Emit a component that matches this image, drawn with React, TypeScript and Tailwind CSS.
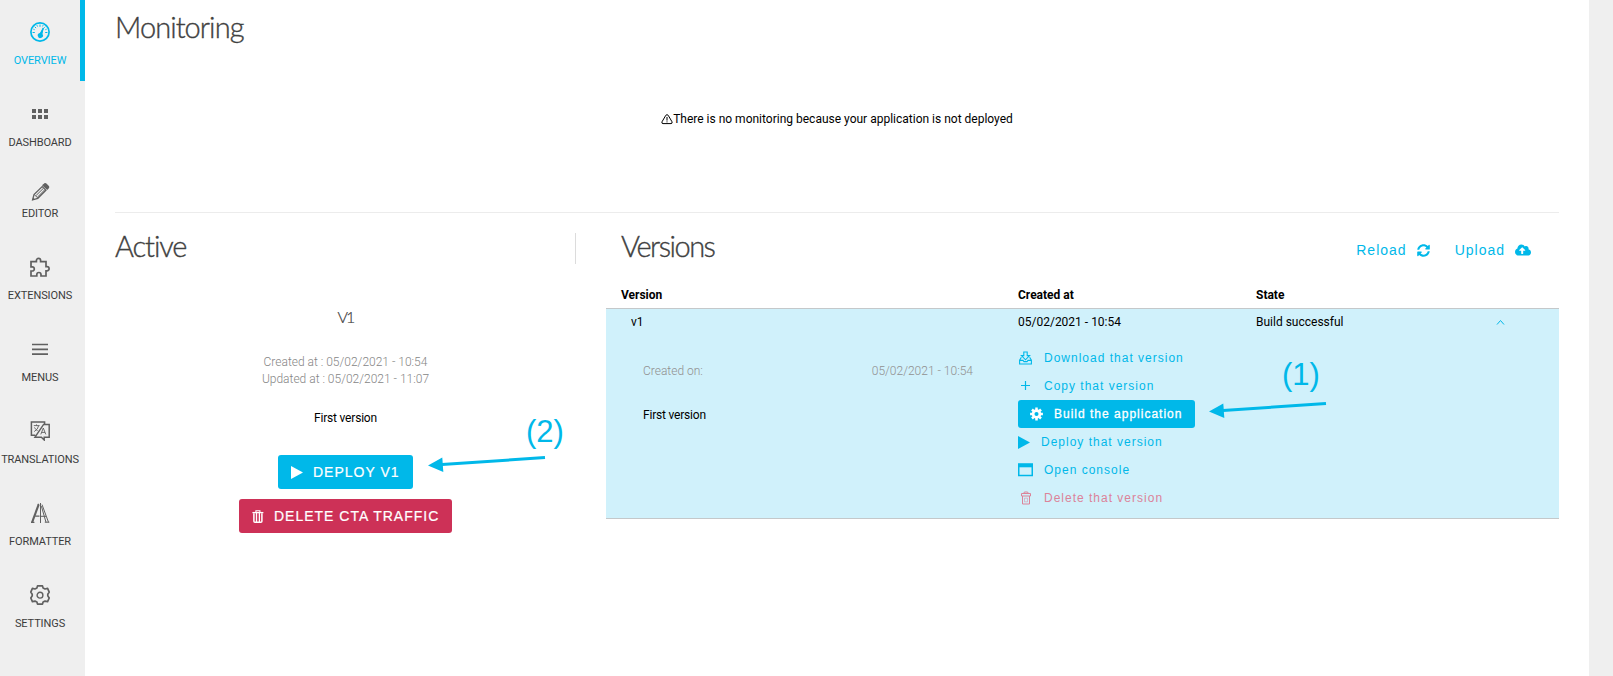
import type { ReactNode } from 'react';
import { FaCloudUploadAlt, FaSyncAlt } from 'react-icons/fa';

function GaugeIcon() {
  return (
    <svg width="20" height="20" viewBox="0 0 20 20" fill="none" stroke="currentColor">
      <circle cx="10" cy="10" r="9.1" strokeWidth="1.7" />
      <path d="M10 2.5v2.3M4.7 4.7l1.4 1.4M2.6 10.5h2.2M15.2 10.5h2.2M15.3 4.7l-1 1M3.4 7.2l1.2.5M6.9 3.2l.6 1.3M13.1 3.2l-.5 1.2M16.6 7.2l-1.2.5" strokeWidth="1" />
      <path d="M10.5 13.2 13.3 6" strokeWidth="1.6" />
      <path d="M13.6 5.2 12.5 12A2.6 2.6 0 1 1 9.8 10.9z" fill="currentColor" stroke="none" />
    </svg>
  );
}

function GridIcon() {
  return (
    <svg width="20" height="20" viewBox="0 0 20 20" fill="currentColor">
      <path d="M2 5h4v4H2zM8 5h4v4H8zM14 5h4v4h-4zM2 11h4v4H2zM8 11h4v4H8zM14 11h4v4h-4z" />
    </svg>
  );
}

function PencilIcon() {
  return (
    <svg width="20" height="20" viewBox="0 0 20 20" fill="none" stroke="currentColor" strokeWidth="1.3">
      <path d="M2.6 17.8 4 12.6 12.2 4.6 15.9 8.2 7.8 16.3z" />
      <path d="M4.2 12.5 8 16.2M6.2 13.4 13 6.7M7.8 14.8 14.5 8" strokeWidth="1" />
      <path d="M13 3.3 14.6 1.9Q15.3 1.4 16 2L18.4 4.5Q19 5.1 18.4 5.8L17.2 7z" fill="currentColor" />
      <path d="M2.3 18.2 3 15.5 5 17.4z" fill="currentColor" stroke="none" />
    </svg>
  );
}

function PuzzleIcon() {
  return (
    <svg width="22" height="20" viewBox="0 0 22 20" fill="none" stroke="currentColor" strokeWidth="1.7">
      <path d="M2 4.7H7.4V3.5A2 2 0 0 1 11.6 3.5V4.7H17V9.6H18A2.1 2.1 0 0 1 18 13.8H17V19H12V17.6A2.1 2.1 0 0 0 7.8 17.6V19H2V14H3.2A2.1 2.1 0 0 0 3.2 9.8H2z" />
    </svg>
  );
}

function MenuIcon() {
  return (
    <svg width="20" height="20" viewBox="0 0 20 20" fill="none" stroke="currentColor" strokeWidth="1.7">
      <path d="M2 5.5h16M2 10.3h16M2 15.2h16" />
    </svg>
  );
}

function TranslateIcon() {
  return (
    <svg width="20" height="20" viewBox="0 0 20 20" fill="none" stroke="currentColor" strokeWidth="1.5">
      <path d="M14.6 3.4V1H1.4V14.2H5.2M5 16.2H11.4L14.2 19V16.2H19.2V3.4H13.6L5 16.2z" />
      <path d="M3.8 4.6H9.6M6.5 3.4V4.6M4.2 10.6Q8 8.4 8.6 4.8M4.4 6.4Q5.6 8.8 7.6 9.6M10.8 13.4 13.3 7 15.8 13.4M11.6 11.4H15" strokeWidth=".9" />
    </svg>
  );
}

function FormatterIcon() {
  return (
    <svg width="20" height="20" viewBox="0 0 20 20" fill="none" stroke="currentColor">
      <path d="M2.1 19.3 8.7 1.4" strokeWidth="2.1" />
      <path d="M1 19.3H4.4M5.2 13.2H9.5M7.8 1.4H9" strokeWidth="1.2" />
      <path d="M10.5 0V20M12 1.6 18.5 19.3M11.4 3.2 16 19.3M10.5 13.3H16" strokeWidth="1" />
      <path d="M14.8 19.2H19.3" strokeWidth="1" />
    </svg>
  );
}

function SettingsIcon() {
  return (
    <svg width="20" height="20" viewBox="0 0 20 20" fill="none" stroke="currentColor" strokeWidth="1.7" strokeLinejoin="round">
      <path d="M7.5.9H12.5L13.1 3.1 15 4 17.6 3.4 19.2 7.1 17.8 9.2V10.9L19.2 13 17.6 16.7 15 16.1 13.1 17 12.5 19.1H7.5L6.9 17 5 16.1 2.4 16.7.8 13 2.2 10.9V9.2L.8 7.1 2.4 3.4 5 4 6.9 3.1z" />
      <circle cx="10" cy="10.2" r="2.9" strokeWidth="1.4" />
    </svg>
  );
}

function WarningIcon() {
  return (
    <svg width="12" height="11" viewBox="0 0 12 11" fill="none" stroke="currentColor" strokeWidth="1">
      <path d="M4.8 1.3Q6 0 7.2 1.3L11 7.8Q11.6 9.5 10 9.6H2Q.4 9.5 1 7.8z" />
      <path d="M6 3v3.6M6 7.4v1" />
    </svg>
  );
}

function TrashIcon() {
  return (
    <svg width="12" height="13" viewBox="0 0 12 13" fill="none" stroke="currentColor">
      <path d="M.4 2.6H11.4" strokeWidth="1.3" />
      <path d="M3.9 2.4V.7H7.9V2.4" strokeWidth="1.1" />
      <path d="M1.9 3.2V11.2Q1.9 12.2 2.9 12.2H8.9Q9.9 12.2 9.9 11.2V3.2" strokeWidth="1.5" />
      <path d="M4.5 3V12M7.4 3V12" strokeWidth="1.3" />
    </svg>
  );
}

function PlayIcon() {
  return (
    <svg width="12" height="13" viewBox="0 0 12 13" fill="currentColor">
      <path d="M0 0 12 6.5 0 13z" />
    </svg>
  );
}

function CogIcon() {
  return (
    <svg width="13" height="14" viewBox="0 0 13 14" fill="none" stroke="currentColor">
      <circle cx="6.5" cy="7" r="3.4" strokeWidth="2.7" />
      <path d="M6.5.6V3M6.5 11v2.4M.1 7h2.4M10.5 7h2.4M2 2.5l1.7 1.7M9.3 9.8 11 11.5M11 2.5 9.3 4.2M3.7 9.8 2 11.5" strokeWidth="2.5" />
    </svg>
  );
}

function DownloadIcon() {
  return (
    <svg width="15" height="14" viewBox="0 0 15 14" fill="none" stroke="currentColor" strokeWidth="1.1">
      <path d="M5.8 1H9.2V4.6H11.6L7.5 8.8 3.4 4.6H5.8z" />
      <path d="M3.4 6.2 1.6 9.2V13H13.4V9.2L11.6 6.2M1.6 9.4H5L6 10.6H9L10 9.4H13.4" />
    </svg>
  );
}

function PlusIcon() {
  return (
    <svg width="15" height="14" viewBox="0 0 15 14" fill="none" stroke="currentColor" strokeWidth="1.2">
      <path d="M3 6.5h9M7.5 2v9" />
    </svg>
  );
}

function ConsoleIcon() {
  return (
    <svg width="15" height="14" viewBox="0 0 15 14" fill="none" stroke="currentColor" strokeWidth="1.5">
      <rect x=".75" y="1.2" width="13.5" height="11.3" />
      <path d="M0 2.4H15" strokeWidth="3.8" />
    </svg>
  );
}

function BinIcon() {
  return (
    <svg width="15" height="14" viewBox="0 0 15 14" fill="none" stroke="currentColor" strokeWidth="1">
      <path d="M3.5 2.5H12.5V5H3.5zM5.6 2.4Q5.8 1 7 1H9Q10.2 1 10.4 2.4M4.5 5V13H11.5V5" />
      <path d="M6.5 7.2h3v3.6h-3z" strokeWidth=".5" />
    </svg>
  );
}

type NavItem = { label: string; icon: ReactNode; active?: boolean; compact?: boolean };

const navItems: NavItem[] = [
  { label: 'OVERVIEW', icon: <GaugeIcon />, active: true },
  { label: 'DASHBOARD', icon: <GridIcon /> },
  { label: 'EDITOR', icon: <PencilIcon />, compact: true },
  { label: 'EXTENSIONS', icon: <PuzzleIcon /> },
  { label: 'MENUS', icon: <MenuIcon /> },
  { label: 'TRANSLATIONS', icon: <TranslateIcon /> },
  { label: 'FORMATTER', icon: <FormatterIcon /> },
  { label: 'SETTINGS', icon: <SettingsIcon /> },
];

function itemLayout(item: NavItem) {
  if (item.active) return 'mb-0.5 h-[81px] gap-2.5 border-[#00b8e9] pt-[22px] text-[#00b8e9]';
  if (item.compact) return 'h-[71px] gap-1 border-transparent pt-[17px] text-[#606060]';
  return 'h-[82px] gap-[11px] border-transparent pt-[21px] text-[#606060]';
}

function Sidebar() {
  return (
    <nav className="w-[85px] shrink-0 bg-[#efefef]">
      {navItems.map((item) => (
        <div key={item.label} className={`flex flex-col items-center border-r-[5px] ${itemLayout(item)}`}>
          {item.icon}
          <span
            className={`text-[11px] leading-4 tracking-[-0.1px] whitespace-nowrap ${item.active ? 'pt-px' : 'text-[#3c3c3c]'}`}
          >
            {item.label}
          </span>
        </div>
      ))}
    </nav>
  );
}

function Title({ children, className }: { children: ReactNode; className: string }) {
  return (
    <h2
      className={`font-[Lato,sans-serif] text-[29px] leading-[38px] font-light text-[#3f4141] [-webkit-text-stroke:0.35px_#3f4141] ${className}`}
    >
      {children}
    </h2>
  );
}

function Action({ icon, label, className = '' }: { icon: ReactNode; label: string; className?: string }) {
  return (
    <button className={`flex h-7 items-center gap-[11px] text-[12px] tracking-[1px] whitespace-nowrap ${className}`}>
      <span>{icon}</span>
      <span className="-mt-px">{label}</span>
    </button>
  );
}

function Arrow() {
  return (
    <svg width="118" height="16" viewBox="0 0 118 16">
      <path d="M14 8.6 117 1.5" stroke="#00b8e9" strokeWidth="3" />
      <path d="M0 9.5 14.3 1.5 15.3 16z" fill="#00b8e9" />
    </svg>
  );
}

function ActivePanel() {
  return (
    <section className="w-[461px] shrink-0 pt-[14px]">
      <div className="flex h-[38px] items-start justify-between">
        <Title className="tracking-[-1.1px]">Active</Title>
        <div className="mt-[6px] h-[31px] w-px bg-[#dcdcdc]" />
      </div>
      <div className="flex flex-col items-center text-[12px]">
        <h3 className="mt-[42px] font-[Lato,sans-serif] text-[16px] leading-5 font-light tracking-[-2px] text-[#3f4141] [-webkit-text-stroke:0.2px_#3f4141]">
          V1
        </h3>
        <div className="mt-[27px] text-center leading-[17px] font-light text-[#868686]">
          <p>Created at : 05/02/2021 - 10:54</p>
          <p>Updated at : 05/02/2021 - 11:07</p>
        </div>
        <p className="mt-[22px] leading-4 tracking-[-0.2px]">First version</p>
        <button className="mt-[29px] flex h-[34px] w-[135px] items-center rounded-[3px] bg-[#00b8e9] pl-[13px] font-[Liberation_Sans,Arial,sans-serif] text-[14px] tracking-[1px] whitespace-nowrap text-white [-webkit-text-stroke:0.2px_white]">
          <PlayIcon />
          <span className="ml-2.5">DEPLOY V1</span>
        </button>
        <button className="mt-2.5 flex h-[34px] w-[213px] items-center rounded-[3px] bg-[#cd3157] pl-[13px] font-[Liberation_Sans,Arial,sans-serif] text-[14px] tracking-[1px] whitespace-nowrap text-white [-webkit-text-stroke:0.2px_white]">
          <TrashIcon />
          <span className="ml-2.5">DELETE CTA TRAFFIC</span>
        </button>
      </div>
    </section>
  );
}

function VersionsPanel() {
  return (
    <section className="ml-[30px] grow pt-[14px]">
      <div className="flex h-[52px] items-start justify-between pr-7 pl-[15px]">
        <Title className="tracking-[-1.5px]">Versions</Title>
        <div className="flex gap-6 pt-[13px] font-[Liberation_Sans,Arial,sans-serif] text-[14px] leading-5 tracking-[1px] text-[#00b8e9]">
          <button className="flex items-center gap-2.5">
            Reload <FaSyncAlt className="mr-px h-[13px] w-[13px]" />
          </button>
          <button className="flex items-center gap-2.5">
            Upload <FaCloudUploadAlt className="h-4 w-4" />
          </button>
        </div>
      </div>
      <div className="text-[12px] leading-4">
        <div className="flex h-[30px] border-b border-[#c4c8ca] pl-[15px] font-bold">
          <div className="w-[397px] pt-2">Version</div>
          <div className="w-[238px] pt-2">Created at</div>
          <div className="pt-2">State</div>
        </div>
        <div className="h-[210px] border-b border-[#c4c8ca] bg-[#d0f1fb]">
          <div className="flex h-[35px] items-start pt-[5px] pl-[25px]">
            <div className="w-[387px]">v1</div>
            <div className="w-[238px]">05/02/2021 - 10:54</div>
            <div className="w-[240px]">Build successful</div>
            <svg className="mt-[5px]" width="9" height="7" viewBox="0 0 9 7" fill="none" stroke="#00b8e9">
              <path d="M1 5.5 4.5 1.5 8 5.5" />
            </svg>
          </div>
          <div className="flex">
            <div className="w-[367px] pt-[19px] pl-[37px]">
              <div className="flex justify-between font-light text-[#909090]">
                <span>Created on:</span>
                <span>05/02/2021 - 10:54</span>
              </div>
              <p className="mt-7 tracking-[-0.2px]">First version</p>
            </div>
            <div className="ml-[45px] w-[191px] font-[Liberation_Sans,Arial,sans-serif] text-[#00b8e9]">
              <Action icon={<DownloadIcon />} label="Download that version" />
              <Action icon={<PlusIcon />} label="Copy that version" />
              <Action
                icon={<CogIcon />}
                label="Build the application"
                className="w-[177px] rounded-[3px] bg-[#00b8e9] pl-3 text-white [-webkit-text-stroke:0.3px_white]"
              />
              <Action icon={<PlayIcon />} label="Deploy that version" />
              <Action icon={<ConsoleIcon />} label="Open console" />
              <Action icon={<BinIcon />} label="Delete that version" className="text-[#dc8399]" />
            </div>
          </div>
        </div>
      </div>
    </section>
  );
}

export default function App() {
  return (
    <div className="relative flex h-[676px] w-[1613px] overflow-hidden bg-[#efefef] font-[Roboto,sans-serif] text-black">
      <Sidebar />
      <main className="w-[1504px] bg-white px-[30px]">
        <section className="h-[213px] border-b border-[#ececec] pt-2">
          <Title className="tracking-[-0.95px]">Monitoring</Title>
          <p className="mt-[65px] flex items-center justify-center text-[12px] leading-4">
            <WarningIcon />
            There is no monitoring because your application is not deployed
          </p>
        </section>
        <div className="flex">
          <ActivePanel />
          <VersionsPanel />
        </div>
      </main>
      <div className="absolute top-[414px] left-[428px] font-[Liberation_Sans,Arial,sans-serif] text-[31px] text-[#00b8e9]">
        <p className="ml-[98px] h-[42px] leading-9">(2)</p>
        <Arrow />
      </div>
      <div className="absolute top-[357px] left-[1209px] font-[Liberation_Sans,Arial,sans-serif] text-[31px] text-[#00b8e9]">
        <p className="ml-[73px] h-[45px] leading-9">(1)</p>
        <Arrow />
      </div>
    </div>
  );
}
